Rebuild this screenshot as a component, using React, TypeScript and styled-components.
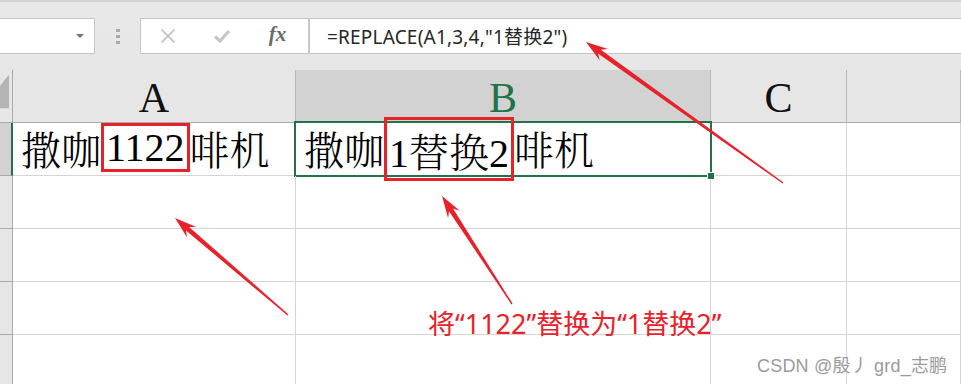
import React from "react";
import styled, { createGlobalStyle } from "styled-components";

const GlobalStyle = createGlobalStyle`
  html, body {
    margin: 0;
    padding: 0;
    background: #e6e6e6;
    overflow: hidden;
  }
`;

const RED = "#e8212a";
const GREEN = "#217346";

const Page = styled.div`
  position: relative;
  width: 961px;
  height: 384px;
  overflow: hidden;
  background: #e6e6e6;
  font-family: "Noto Sans", "Noto Sans CJK SC", sans-serif;
`;

const TopEdge = styled.div`
  height: 2px;
  background: #d8d5d1;
`;

const FormulaBar = styled.div`
  display: flex;
  align-items: center;
  height: 68px;
  padding: 16px 0;
  box-sizing: border-box;
  background: linear-gradient(#e9e9e9, #e6e6e6);
`;

const Box = styled.div`
  height: 36px;
  box-sizing: border-box;
  background: #fff;
  border: 1px solid #c6c6c6;
  display: flex;
  align-items: center;
`;

const NameBox = styled(Box)`
  width: 96px;
  margin-left: -1px;
  justify-content: flex-end;
  padding-right: 10px;
`;

const Caret = styled.span`
  width: 0;
  height: 0;
  border-left: 4px solid transparent;
  border-right: 4px solid transparent;
  border-top: 4px solid #737373;
`;

const Grip = styled.div`
  width: 45px;
  display: flex;
  flex-direction: column;
  align-items: center;
  gap: 3px;
  margin-top: 1px;
`;

const Dot = styled.span`
  width: 4px;
  height: 3px;
  background: #a9a9a9;
`;

const FuncBox = styled(Box)`
  width: 169px;
`;

const FuncButton = styled.div`
  width: 54px;
  height: 100%;
  display: flex;
  align-items: center;
  justify-content: center;
`;

const Fx = styled.span`
  font-family: "Liberation Serif", serif;
  font-style: italic;
  font-weight: bold;
  font-size: 21px;
  color: #6b6b6b;
  margin: -3px 0 0 3px;
`;

const FormulaBox = styled(Box)`
  flex: 1;
  margin-right: -1px;
  padding-left: 17px;
  font-size: 19px;
  letter-spacing: 0.2px;
  color: #262626;
`;

const Sheet = styled.div`
  display: grid;
  grid-template-columns: 13px 283px 415px 136px 1fr;
  grid-template-rows: 53px repeat(5, 53px);
  background: #fff;
`;

const ColHead = styled.div<{ $active?: boolean }>`
  box-sizing: border-box;
  display: flex;
  align-items: center;
  justify-content: center;
  background: ${(p) => (p.$active ? "#d2d2d2" : "#e6e6e6")};
  border-right: 1px solid #b9b9b9;
  border-bottom: ${(p) => (p.$active ? `2px solid ${GREEN}` : "1px solid #ababab")};
  font-family: "Liberation Serif", serif;
  font-size: 42px;
  color: ${(p) => (p.$active ? GREEN : "#111")};
  padding-top: 4px;
`;

const Corner = styled.div`
  box-sizing: border-box;
  background: #e6e6e6;
  border-right: 1px solid #ababab;
  border-bottom: 1px solid #ababab;
  display: flex;
  align-items: flex-end;
  justify-content: flex-end;
  padding: 0 3px 12px 0;
`;

const RowHead = styled.div<{ $active?: boolean }>`
  box-sizing: border-box;
  background: ${(p) => (p.$active ? "#d2d2d2" : "#e6e6e6")};
  border-right: ${(p) => (p.$active ? `2px solid ${GREEN}` : "1px solid #ababab")};
  border-bottom: 1px solid #ababab;
`;

const Cell = styled.div<{ $selected?: boolean }>`
  position: relative;
  box-sizing: border-box;
  border-right: 1px solid #d4d4d4;
  border-bottom: 1px solid #d4d4d4;
  display: flex;
  align-items: center;
  padding-left: 8px;
  font-family: "Liberation Serif", "Noto Serif CJK SC", "Noto Sans CJK SC", serif;
  font-weight: 300;
  font-size: 40px;
  color: #000;
  white-space: nowrap;

  ${(p) =>
    p.$selected &&
    `
    &::after {
      content: "";
      position: absolute;
      left: -2px;
      top: -2px;
      right: -2px;
      bottom: -2px;
      border: 2px solid ${GREEN};
      pointer-events: none;
    }
  `}
`;

const FillHandle = styled.span`
  position: absolute;
  right: -5px;
  bottom: -5px;
  width: 6px;
  height: 6px;
  background: ${GREEN};
  border: 1px solid #fff;
  z-index: 2;
`;

const Mark = styled.span<{ $h: number; $px: number }>`
  display: inline-flex;
  align-items: center;
  height: ${(p) => p.$h}px;
  box-sizing: border-box;
  border: 3px solid ${RED};
  padding: 0 ${(p) => p.$px}px;
  margin-top: ${(p) => (p.$h > 53 ? 0 : -4)}px;
  z-index: 1;
`;

const Text = styled.span`
  margin-top: -4px;
`;

const Overlay = styled.svg`
  position: absolute;
  left: 0;
  top: 0;
  pointer-events: none;
  z-index: 5;
`;

const Note = styled.div`
  position: absolute;
  left: 428px;
  top: 303px;
  font-family: "Noto Sans", "Noto Sans CJK SC", sans-serif;
  font-size: 27px;
  color: ${RED};
  z-index: 6;
  white-space: nowrap;
`;

const Watermark = styled.div`
  position: absolute;
  left: 757px;
  top: 351px;
  font-family: "Liberation Sans", "Noto Sans CJK SC", sans-serif;
  font-size: 18px;
  letter-spacing: 0.2px;
  color: #9b9b9b;
  text-shadow: 0 0 2px #fff, 0 0 2px #fff;
  white-space: nowrap;
  z-index: 6;
`;

function arrowPoints(x1: number, y1: number, x2: number, y2: number) {
  const dx = x2 - x1;
  const dy = y2 - y1;
  const len = Math.hypot(dx, dy);
  const ux = dx / len;
  const uy = dy / len;
  const nx = -uy;
  const ny = ux;
  const L = 22;
  const W = 7;
  const w = 2.4;
  const t = 0.7;
  const at = (d: number, s: number) =>
    `${(x2 - ux * d + nx * s).toFixed(1)},${(y2 - uy * d + ny * s).toFixed(1)}`;
  return [
    `${(x1 + nx * t).toFixed(1)},${(y1 + ny * t).toFixed(1)}`,
    at(L * 0.75, w),
    at(L, W),
    `${x2},${y2}`,
    at(L, -W),
    at(L * 0.75, -w),
    `${(x1 - nx * t).toFixed(1)},${(y1 - ny * t).toFixed(1)}`,
  ].join(" ");
}

const arrows = [
  [783, 183, 586, 42],
  [288, 315, 175, 218],
  [512, 304, 442, 196],
];

const columns = ["A", "B", "C", ""];

export default function App() {
  return (
    <Page>
      <GlobalStyle />
      <TopEdge />
      <FormulaBar>
        <NameBox>
          <Caret />
        </NameBox>
        <Grip>
          <Dot />
          <Dot />
          <Dot />
        </Grip>
        <FuncBox>
          <FuncButton>
            <svg width="16" height="16" viewBox="0 0 16 16">
              <path d="M1.5 1.5 L14.5 14.5 M14.5 1.5 L1.5 14.5" stroke="#bdbdbd" strokeWidth="1.7" fill="none" />
            </svg>
          </FuncButton>
          <FuncButton>
            <svg width="18" height="16" viewBox="0 0 18 16">
              <path d="M2 8.5 L7 13 L16 3" stroke="#c6c6c6" strokeWidth="3.2" fill="none" />
            </svg>
          </FuncButton>
          <FuncButton>
            <Fx>fx</Fx>
          </FuncButton>
        </FuncBox>
        <FormulaBox>=REPLACE(A1,3,4,"1替换2")</FormulaBox>
      </FormulaBar>

      <Sheet>
        <Corner>
          <svg width="10" height="37" viewBox="0 0 10 37">
            <polygon points="10,0 10,37 0,37 0,12" fill="#b4b4b4" />
          </svg>
        </Corner>
        {columns.map((c) => (
          <ColHead key={c || "d"} $active={c === "B"}>
            {c}
          </ColHead>
        ))}

        <RowHead $active />
        <Cell>
          <Text>撒咖</Text>
          <Mark $h={49} $px={2}>1122</Mark>
          <Text>啡机</Text>
        </Cell>
        <Cell $selected>
          <Text>撒咖</Text>
          <Mark $h={64} $px={2}>1替换2</Mark>
          <Text>啡机</Text>
          <FillHandle />
        </Cell>
        <Cell />
        <Cell />

        {[2, 3, 4, 5].map((r) => (
          <React.Fragment key={r}>
            <RowHead />
            <Cell />
            <Cell />
            <Cell />
            <Cell />
          </React.Fragment>
        ))}
      </Sheet>

      <Overlay width="961" height="384" viewBox="0 0 961 384">
        {arrows.map(([x1, y1, x2, y2], i) => (
          <polygon key={i} points={arrowPoints(x1, y1, x2, y2)} fill={RED} />
        ))}
      </Overlay>

      <Note>将“1122”替换为“1替换2”</Note>
      <Watermark>CSDN @殷丿 grd_志鹏</Watermark>
    </Page>
  );
}
